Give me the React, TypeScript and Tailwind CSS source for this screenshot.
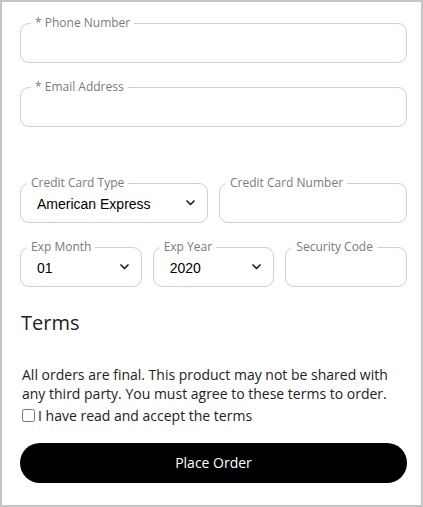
import React from 'react';

const labelFont = { fontFamily: '"Open Sans", "Liberation Sans", sans-serif' };
const valueFont = { fontFamily: '"Liberation Sans", Arial, sans-serif' };

const Chevron = () => (
  <svg width="9" height="6" viewBox="0 0 9 6" className="pointer-events-none absolute right-[6px] top-1/2 -translate-y-1/2">
    <path d="M1 1 L4.5 4.5 L8 1" fill="none" stroke="#222" strokeWidth="1.7" strokeLinecap="round" strokeLinejoin="round" />
  </svg>
);

const Field = ({
  label,
  wide = false,
  children
}: {
  label: string;
  wide?: boolean;
  children?: React.ReactNode;
}) => (
  <fieldset className={`border border-[#cfcfcf] rounded-[9px] ${wide ? 'px-[10px]' : 'px-[6px]'}`}>
    <legend className="px-1 text-xs leading-4 text-[#7a7a7a]" style={labelFont}>
      {label}
    </legend>
    <div className="h-[31px] relative">{children}</div>
  </fieldset>
);

const SelectBox = ({ value, options }: { value: string; options: string[] }) => (
  <div className="relative h-[24px]">
    <select
      defaultValue={value}
      className="appearance-none w-full h-[24px] bg-transparent pl-[10px] pr-5 text-sm text-black outline-none"
      style={valueFont}
    >
      {options.map((o) => (
        <option key={o} value={o}>
          {o}
        </option>
      ))}
    </select>
    <Chevron />
  </div>
);

export default function App() {
  return (
    <div className="w-[423px] h-[507px] border-2 border-[#c4c4c4] bg-white pl-[18px] pr-[14px] pt-[13px]">
      <Field label="* Phone Number" wide>
        <input type="tel" className="w-full h-full bg-transparent outline-none" />
      </Field>
      <div className="mt-4">
        <Field label="* Email Address" wide>
          <input type="email" className="w-full h-full bg-transparent outline-none" />
        </Field>
      </div>

      <div className="mt-12 grid grid-cols-2 gap-[11px]">
        <Field label="Credit Card Type">
          <SelectBox value="American Express" options={['American Express', 'Visa', 'MasterCard', 'Discover']} />
        </Field>
        <Field label="Credit Card Number">
          <input type="text" className="w-full h-full bg-transparent outline-none" />
        </Field>
      </div>

      <div className="mt-4 grid grid-cols-3 gap-[11px]">
        <Field label="Exp Month">
          <SelectBox value="01" options={['01', '02', '03', '04', '05', '06', '07', '08', '09', '10', '11', '12']} />
        </Field>
        <Field label="Exp Year">
          <SelectBox value="2020" options={['2020', '2021', '2022', '2023', '2024', '2025']} />
        </Field>
        <Field label="Security Code">
          <input type="text" className="w-full h-full bg-transparent outline-none" />
        </Field>
      </div>

      <div style={labelFont} className="text-[#222]">
        <h2 className="mt-[22px] text-xl leading-7 font-normal pl-px">Terms</h2>
        <p className="mt-7 pl-[2px] text-sm leading-[19px]">
          All orders are final. This product may not be shared with any third party. You must agree to these terms
          to order.
        </p>
        <label className="mt-[3px] pl-[2px] flex items-center gap-[3px] text-sm leading-[19px]">
          <input type="checkbox" className="w-[13px] h-[13px] m-0" />
          <span>I have read and accept the terms</span>
        </label>
        <button
          type="button"
          className="mt-[18px] w-full h-10 rounded-full bg-black text-white text-sm"
        >
          Place Order
        </button>
      </div>
    </div>
  );
}
